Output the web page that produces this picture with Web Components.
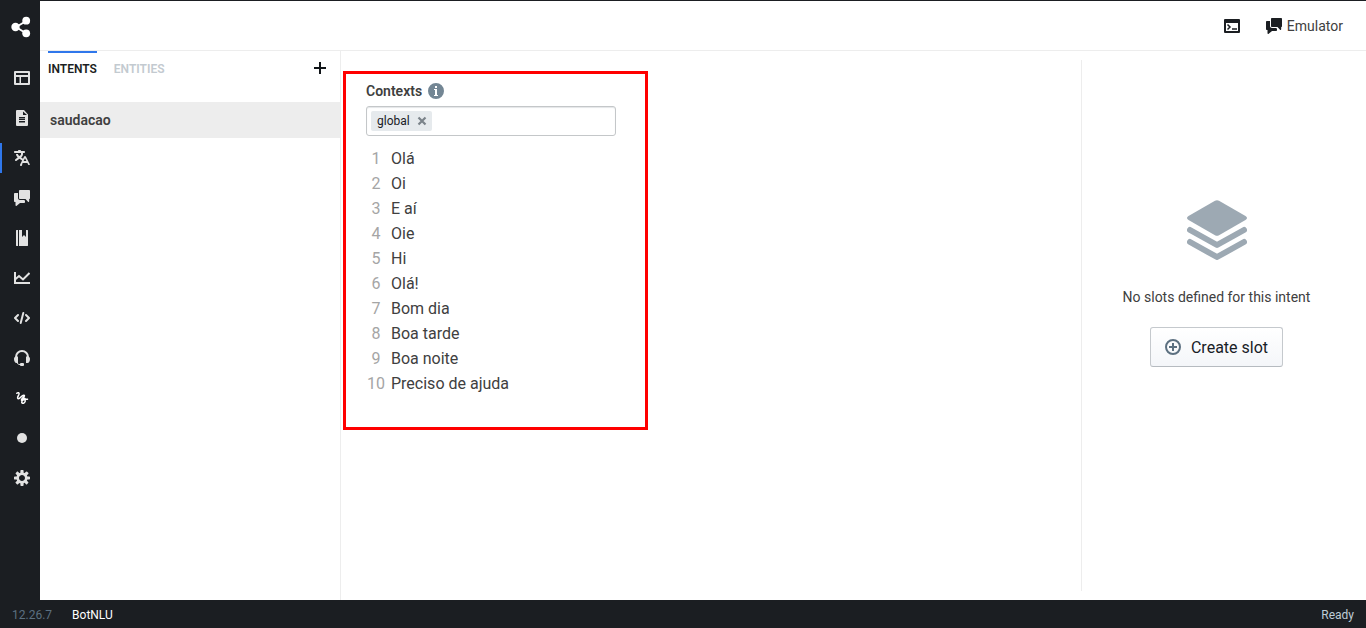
<!DOCTYPE html>
<html lang="en">
<head>
<meta charset="utf-8">
<title>BotNLU</title>
<style>
  body { margin: 0; font-family: Roboto, "Liberation Sans", sans-serif; font-size: 14px; color: #404040; background: #fff; }
</style>
</head>
<body>
<studio-app></studio-app>
<script>
const ICONS = {
  share: '<path d="M5 10 14.500 4.500M5 10l9.500 6" stroke="currentColor" stroke-width="2" fill="none"/><circle cx="4.500" cy="10" r="4.200"/><circle cx="15.200" cy="3.700" r="3.900"/><circle cx="15.200" cy="16.300" r="3.900"/>',
  layout: '<path fill-rule="evenodd" d="M1 1h14a1 1 0 0 1 1 1v12a1 1 0 0 1-1 1H1a1 1 0 0 1-1-1V2a1 1 0 0 1 1-1zM2 3v2h12V3zM2 7v6h3.500V7zM7 7v6h7V7z"/>',
  document: '<path fill-rule="evenodd" d="M3 0h7l4 4.500V15a1 1 0 0 1-1 1H3a1 1 0 0 1-1-1V1a1 1 0 0 1 1-1zM9 1.500V5h4zM5 7v1.500h6V7zM5 9v1h6V9zM5 11v1.500h6V11z"/>',
  translate: '<path d="M15.89 14.56l-3.99-8h-.01c-.17-.33-.5-.56-.89-.56s-.72.23-.89.56h-.01L9 8.76 7.17 7.38l.23-.18C8.37 6.47 9 5.31 9 4V3h1c.55 0 1-.45 1-1s-.45-1-1-1H7c0-.55-.45-1-1-1H5c-.55 0-1 .45-1 1H1c-.55 0-1 .45-1 1s.45 1 1 1h6v1c0 .66-.32 1.25-.82 1.61l-.68.51-.68-.5C4.32 5.25 4 4.66 4 4H2c0 1.31.63 2.47 1.6 3.2l.23.17L1.4 9.2l.01.01C1.17 9.4 1 9.67 1 10c0 .55.45 1 1 1 .23 0 .42-.09.59-.21l.01.01 2.9-2.17 2.6 1.95-1.99 3.98h.01c-.07.13-.12.28-.12.44 0 .55.45 1 1 1 .39 0 .72-.23.89-.56h.01L8.62 13h4.76l.72 1.45h.01c.17.32.5.55.89.55.55 0 1-.45 1-1 0-.16-.05-.31-.11-.44zM9.62 11L11 8.24 12.38 11H9.62z"/>',
  chat: '<path d="M6 10c-1.1 0-2-.9-2-2V3H1c-.55 0-1 .45-1 1v7c0 .55.45 1 1 1h.500v3c0 .55.2 1 .6 1 .25 0 .45-.1.6-.29L6 13h4c.55 0 1-.45 1-1v-1.17L10.170 10zM15 0H6c-.55 0-1 .45-1 1v7c0 .55.45 1 1 1h5.500l2.500 2.700c.15.2.35.3.6.3.4 0 .6-.45.6-1V9c.55 0 .8-.45.800-1V1c0-.55-.45-1-1-1z"/>',
  manual: '<path d="M2.500 0H4v16H2.500C2.200 16 2 15.800 2 15.500V.5c0-.3.2-.5.5-.5zM5 0h3v7l2-2 2 2V0h1.500c.3 0 .5.2.5.5v15c0 .3-.2.500-.500.500H5z"/>',
  chart: '<path fill="none" stroke="currentColor" stroke-width="2" d="M1 2v11h15"/><path fill="none" stroke="currentColor" stroke-width="2" d="M1 9.500 5 6l4 3.500L15.500 3"/>',
  code: '<path fill="none" stroke="currentColor" stroke-width="2" stroke-linejoin="round" stroke-linecap="round" d="M4 5 1 8l3 3M12 5l3 3-3 3M9.300 3 6.700 13"/>',
  headset: '<path fill="none" stroke="currentColor" stroke-width="2" d="M2 9V7a6 6 0 0 1 12 0v2"/><path d="M0 9c0-1.500.8-2.500 2-2.500h2V13H2.500C1 13 0 11 0 9zM16 9c0-1.500-.8-2.500-2-2.500h-2V13h1.500C15 13 16 11 16 9z"/><path fill="none" stroke="currentColor" d="M3 12c0 1.500 1 2.500 3 2.500"/><rect x="6" y="13" width="4" height="3" rx="1"/>',
  gesture: '<path fill="none" stroke="#fff" stroke-width="1.500" stroke-linecap="round" stroke-linejoin="round" d="M2.800 3.300C4 2.200 5.600 2.600 5 4.300 4.400 5.800 2.700 7.600 4 8.600 6 9.600 7.600 4.800 9.800 5.200 12.300 6 6.600 8.600 7.400 10.200M13.500 9.200C10.500 8.800 7.500 10.500 7.700 12.300 8.200 14.200 11.800 13.500 11.300 9.300 11 7.800 9.500 8 7.500 10"/>',
  dot: '<circle cx="8" cy="8" r="5"/>',
  cog: '<path d="M15.190 6.390h-1.850c-.11-.37-.27-.71-.45-1.040l1.360-1.360c.31-.31.31-.82 0-1.130l-1.130-1.130a.803.803 0 0 0-1.130 0l-1.360 1.360c-.33-.17-.67-.33-1.040-.44V.79c0-.44-.36-.8-.8-.8h-1.600c-.44 0-.8.36-.8.8v1.860c-.39.12-.75.28-1.100.47l-1.300-1.300c-.3-.3-.79-.3-1.090 0L1.820 2.910c-.3.3-.3.79 0 1.090l1.300 1.300c-.2.34-.36.7-.48 1.090H.79c-.44 0-.8.36-.8.8v1.600c0 .44.36.8.8.8h1.850c.11.37.27.71.45 1.040l-1.360 1.360c-.31.31-.31.82 0 1.130l1.130 1.130c.31.31.82.31 1.130 0l1.360-1.360c.33.18.67.33 1.040.44v1.860c0 .44.36.8.8.8h1.600c.44 0 .8-.36.8-.8v-1.860c.39-.12.75-.28 1.100-.47l1.300 1.300c.3.3.79.3 1.090 0l1.090-1.090c.3-.3.3-.79 0-1.090l-1.300-1.300c.19-.35.36-.71.48-1.100h1.850c.44 0 .8-.36.8-.8v-1.600a.816.816 0 0 0-.81-.79zm-7.200 4.600c-1.660 0-3-1.340-3-3s1.340-3 3-3 3 1.340 3 3-1.340 3-3 3z"/>',
  console: '<path fill-rule="evenodd" d="M1 1h14a1 1 0 0 1 1 1v12a1 1 0 0 1-1 1H1a1 1 0 0 1-1-1V2a1 1 0 0 1 1-1zM2 5v8h12V5z"/><path fill="none" stroke="currentColor" stroke-width="1.500" d="M3.500 6.500 6 9l-2.500 2.500M8 11h5"/>',
  plus: '<path d="M7 2h2v5h5v2H9v5H7V9H2V7h5z"/>',
  info: '<path fill-rule="evenodd" d="M8 0a8 8 0 1 1 0 16A8 8 0 0 1 8 0zM7 3v2h2V3zM6 6v1h1v5H6v1h4v-1H9V6z"/>',
  cross: '<path fill="none" stroke="currentColor" stroke-width="2.200" d="m4.500 4.500 7 7m0-7-7 7"/>',
  add: '<circle cx="8" cy="8" r="7" fill="none" stroke="currentColor" stroke-width="2"/><path d="M7 4h2v3h3v2H9v3H7V9H4V7h3z"/>',
  layers: '<path d="M28 .7q2-1.100 4 0L58.500 16q3 2 0 4L32 35.300q-2 1.100-4 0L1.500 20q-3-2 0-4z"/><path fill="none" stroke="currentColor" stroke-width="6" stroke-linecap="round" stroke-linejoin="round" d="M3 30l27 15 27-15M3 42l27 15 27-15"/>'
};
const BOXES = { share: 20, layers: 60 };

function define(name, html, setup) {
  const template = document.createElement('template');
  template.innerHTML = html;
  customElements.define(name, class extends HTMLElement {
    constructor() {
      super();
      this.attachShadow({ mode: 'open' }).append(template.content.cloneNode(true));
    }
    connectedCallback() { if (setup) setup(this, this.shadowRoot); }
  });
}

define('ui-icon', `
<style>
  :host { display: block; flex: none; width: 16px; height: 16px; }
  svg { display: block; width: 100%; height: 100%; fill: currentColor; }
</style><svg aria-hidden="true"></svg>`, (host, root) => {
  const name = host.getAttribute('name'), size = BOXES[name] || 16;
  const svg = root.querySelector('svg');
  svg.setAttribute('viewBox', `0 0 ${size} ${size}`);
  svg.innerHTML = ICONS[name];
});

define('side-nav', `
<style>
  :host { display: block; background: #1b1e22; color: #e2e2e2; }
  nav { display: flex; flex-direction: column; gap: 10px; }
  a { display: flex; align-items: center; justify-content: center; height: 30px; color: inherit; padding: 0 0 0 4px; }
  .logo { height: 52px; color: #fff; padding: 0 0 0 2px; }
  .logo ui-icon { width: 20px; height: 22px; }
  .active { border-left: 2px solid #2f77eb; padding-left: 2px; }
</style>
<nav aria-label="Studio">
  <a class="logo" href="#" aria-label="Home"><ui-icon name="share"></ui-icon></a>
  <a href="#" aria-label="Flows"><ui-icon name="layout"></ui-icon></a>
  <a href="#" aria-label="Content"><ui-icon name="document"></ui-icon></a>
  <a class="active" href="#" aria-label="NLU" aria-current="page"><ui-icon name="translate"></ui-icon></a>
  <a href="#" aria-label="Chat"><ui-icon name="chat"></ui-icon></a>
  <a href="#" aria-label="Q&amp;A"><ui-icon name="manual"></ui-icon></a>
  <a href="#" aria-label="Analytics"><ui-icon name="chart"></ui-icon></a>
  <a href="#" aria-label="Code editor"><ui-icon name="code"></ui-icon></a>
  <a href="#" aria-label="Support"><ui-icon name="headset"></ui-icon></a>
  <a href="#" aria-label="Misunderstood"><ui-icon name="gesture"></ui-icon></a>
  <a href="#" aria-label="Module"><ui-icon name="dot"></ui-icon></a>
  <a href="#" aria-label="Settings"><ui-icon name="cog"></ui-icon></a>
</nav>`);

define('top-bar', `
<style>
  :host { display: flex; align-items: center; justify-content: flex-end; gap: 26px; height: 49px; padding: 0 23px; border-bottom: 1px solid #ededed; }
  button { display: flex; align-items: center; gap: 5px; padding: 0; border: 0; background: none; font: inherit; color: #404040; }
  ui-icon { color: #1b1e22; }
</style>
<button type="button" aria-label="Toggle console"><ui-icon name="console"></ui-icon></button>
<button type="button"><ui-icon name="chat"></ui-icon>Emulator</button>`);

define('intent-list', `
<style>
  :host { display: block; border-right: 1px solid #ededed; }
  header { display: flex; gap: 17px; padding: 0 12px 0 8px; height: 34px; font-size: 12px; font-weight: 600; }
  button { font: inherit; border: 0; background: none; padding: 0; color: #c3cad0; border-top: 2px solid transparent; }
  button[aria-selected=true] { color: #1b1e22; border-top-color: #2f77eb; }
  .new { margin-left: auto; color: #101418; border-top: 0; }
  ul { list-style: none; margin: 17px 0 0; padding: 0; }
  a { display: block; padding: 0 10px; line-height: 36px; background: #ededed; color: #404040; font-weight: 600; text-decoration: none; }
</style>
<header>
  <button type="button" role="tab" aria-selected="true">INTENTS</button>
  <button type="button" role="tab" aria-selected="false">ENTITIES</button>
  <button class="new" type="button" aria-label="New intent"><ui-icon name="plus"></ui-icon></button>
</header>
<ul><li><a href="#">saudacao</a></li></ul>`);

define('context-tag', `
<style>
  :host { display: flex; align-items: center; gap: 4px; height: 20px; padding: 0 2px 0 6px; border-radius: 2px; background: #e6eaed; color: #182026; font-size: 12px; }
  button { padding: 0; border: 0; background: none; color: #7b838a; }
</style><slot></slot><button type="button" aria-label="Remove"><ui-icon name="cross"></ui-icon></button>`);

define('intent-editor', `
<style>
  :host { display: block; padding: 20px 2px; }
  section { box-sizing: border-box; max-width: 305px; min-height: 359px; padding: 7px 29px 30px 20px; border: 3px solid #ff0000; }
  .title { display: flex; align-items: center; gap: 6px; height: 20px; font-weight: 600; }
  ui-icon { color: #738694; }
  .field { display: flex; align-items: center; gap: 5px; margin-top: 5px; height: 28px; padding: 0 4px; border: 1px solid #c4c7c9; border-radius: 3px; box-shadow: inset 0 1px 1px #e4e6e8; }
  input { flex: 1; min-width: 0; border: 0; padding: 0; outline: 0; background: none; font: inherit; }
  ol { list-style: none; margin: 10px 0 0; padding: 0; font-size: 16px; line-height: 25px; }
  li { display: flex; gap: 5px; }
  li span { width: 20px; text-align: center; color: #a5a5a5; }
</style>
<section>
  <div class="title"><label for="ctx">Contexts</label><ui-icon name="info"></ui-icon></div>
  <div class="field"><context-tag>global</context-tag><input id="ctx" type="text"></div>
  <ol></ol>
</section>`, (host, root) => {
  const list = root.querySelector('ol');
  list.replaceChildren(...host.getAttribute('utterances').split('|').map((text, i) => {
    const li = document.createElement('li'), n = document.createElement('span');
    n.textContent = i + 1;
    li.append(n, text);
    return li;
  }));
});

define('slot-panel', `
<style>
  :host { display: flex; flex-direction: column; align-items: center; margin: 9px 0; padding: 140px 15px 0 0; border-left: 1px solid #ededed; }
  ui-icon[name=layers] { width: 60px; height: 60px; color: #9da9b3; }
  p { margin: 27px 0 20px; line-height: 20px; }
  button { display: flex; align-items: center; gap: 10px; height: 40px; padding: 0 14px; border: 1px solid #c5c9cd; border-bottom-color: #b6bbc0; border-radius: 3px; background: linear-gradient(#fff, #f4f6f9); color: #182026; font: inherit; font-size: 16px; }
  button ui-icon { color: #5c7080; }
</style>
<ui-icon name="layers"></ui-icon>
<p>No slots defined for this intent</p>
<button type="button"><ui-icon name="add"></ui-icon>Create slot</button>`);

define('status-bar', `
<style>
  :host { display: flex; align-items: center; gap: 20px; height: 28px; padding: 0 12px; background: #1b1e22; font-size: 12px; line-height: 30px; color: #fff; }
  span { height: 28px; }
  .version { color: #5c7080; }
  .state { margin-left: auto; color: #bfccd6; }
</style>
<span class="version">12.26.7</span><span>BotNLU</span><span class="state">Ready</span>`);

define('studio-app', `
<style>
  :host { display: grid; box-sizing: border-box; min-height: 100vh; grid-template: auto 1fr auto / 40px 1fr; border-top: 1px solid #1b1e22; }
  side-nav { grid-row: 1 / 3; }
  status-bar { grid-column: 1 / 3; }
  main { display: grid; grid-template-columns: 301px 1fr 285px; }
</style>
<side-nav></side-nav>
<top-bar></top-bar>
<main>
  <intent-list></intent-list>
  <intent-editor utterances="Olá|Oi|E aí|Oie|Hi|Olá!|Bom dia|Boa tarde|Boa noite|Preciso de ajuda"></intent-editor>
  <slot-panel></slot-panel>
</main>
<status-bar></status-bar>`);
</script>
</body>
</html>
